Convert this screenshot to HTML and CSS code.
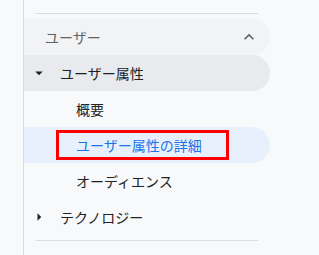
FILE: index.html
```html
<!DOCTYPE html>
<html lang="ja">
<head>
<meta charset="utf-8">
<link rel="stylesheet" href="styles.css">
</head>
<body>
<div class="page">
  <div class="rail"></div>
  <nav class="nav">
    <div class="divider top"></div>
    <div class="row section">
      <span class="label">ユーザー</span>
      <svg class="chev" viewBox="0 0 24 24" width="20" height="20"><path d="M12 8l-6 6 1.41 1.41L12 10.83l4.59 4.58L18 14z"/></svg>
    </div>
    <div class="row group open">
      <svg class="tri" viewBox="0 0 24 24" width="18" height="18"><path d="M7 10l5 5 5-5z"/></svg>
      <span class="label">ユーザー属性</span>
    </div>
    <div class="row item"><span class="label">概要</span></div>
    <div class="row item selected">
      <span class="label">ユーザー属性の詳細</span>
      <span class="highlight"></span>
    </div>
    <div class="row item"><span class="label">オーディエンス</span></div>
    <div class="row group">
      <svg class="tri" viewBox="0 0 24 24" width="18" height="18"><path d="M10 17l5-5-5-5v10z"/></svg>
      <span class="label">テクノロジー</span>
    </div>
    <div class="divider bottom"></div>
  </nav>
</div>
</body>
</html>
```
FILE: styles.css
```css
html, body {
  margin: 0;
  padding: 0;
  background: #f8f9fa;
  font-family: "Noto Sans CJK JP", "Noto Sans", sans-serif;
  font-size: 14px;
  color: #202124;
}
.page {
  display: flex;
  height: 255px;
  overflow: hidden;
}
.rail {
  width: 23px;
  flex: none;
  border-right: 1px solid #dadce0;
  background: #f8f9fa;
}
.nav {
  width: 246px;
  display: flex;
  flex-direction: column;
}
.divider {
  height: 1px;
  background: #dadce0;
  margin-left: 12px;
  width: 222px;
}
.divider.top { margin-top: 13px; margin-bottom: 5px; }
.divider.bottom { margin-top: 5px; }
.row {
  position: relative;
  height: 36px;
  display: flex;
  align-items: center;
  border-radius: 0 18px 18px 0;
  line-height: 20px;
}
.section {
  background: #f1f3f4;
  padding-left: 21px;
  padding-right: 11px;
  justify-content: space-between;
  color: #5f6368;
}
.chev { fill: #5f6368; }
.group { padding-left: 6px; gap: 12px; }
.group.open { background: #e8eaed; }
.tri { fill: #202124; }
.item { padding-left: 52px; }
.selected {
  background: #e8f0fe;
  color: #1a73e8;
}
.highlight {
  position: absolute;
  left: 32px;
  top: 3px;
  width: 173px;
  height: 30px;
  box-sizing: border-box;
  border: 3px solid #ff0000;
}
```
